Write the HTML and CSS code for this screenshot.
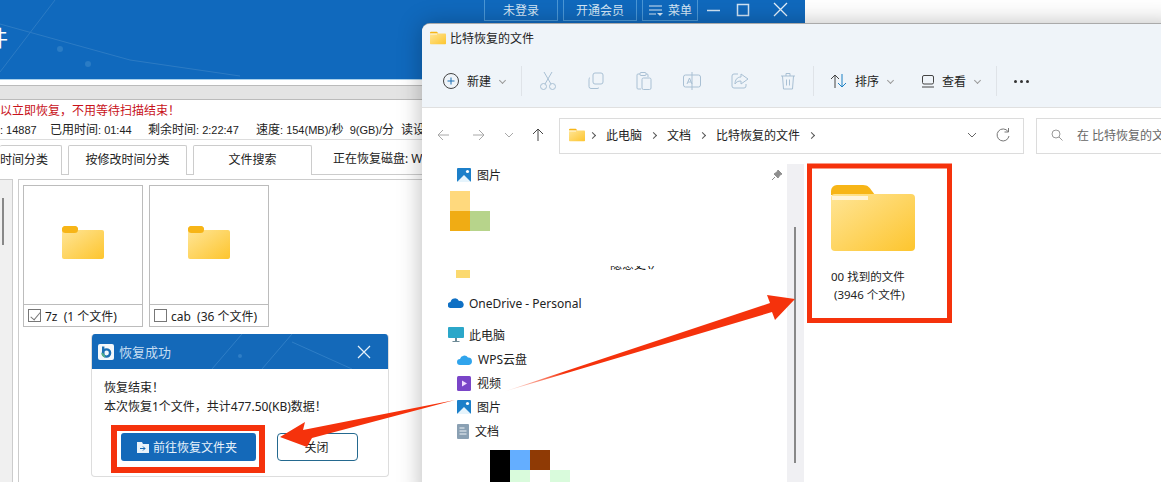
FILE: index.html
```html
<!DOCTYPE html>
<html lang="zh-CN">
  <head>
    <meta charset="UTF-8" />
    <title>比特恢复的文件</title>
    <link rel="stylesheet" href="styles.css">
  </head>
  <body>
    <svg class="defs" width="0" height="0">
      <defs>
        <linearGradient id="folder-fill" x1="0" y1="0" x2="1" y2="1">
          <stop offset="0" stop-color="#ffe596" />
          <stop offset="1" stop-color="#fdc52e" />
        </linearGradient>
        <linearGradient id="arrow-fade" gradientUnits="userSpaceOnUse" x1="503" y1="392" x2="565" y2="372">
          <stop offset="0" stop-color="#f5320c" stop-opacity="0" />
          <stop offset="1" stop-color="#f5320c" />
        </linearGradient>
        <symbol id="folder" viewBox="0 0 84 66">
          <path d="M0 6a6 6 0 0 1 6-6h26c5 0 7 3 9 6l3 4H0z" fill="#f7b517" />
          <rect y="9" width="84" height="57" rx="4" fill="url(#folder-fill)" />
          <rect x="1" y="11" width="36" height="4" fill="#fff4d8" />
        </symbol>
        <symbol id="folder-small" viewBox="0 0 42 33">
          <rect width="16" height="9" rx="4" fill="#f7b517" />
          <rect y="4" width="42" height="29" rx="2" fill="url(#folder-fill)" />
          <rect width="16" height="7" rx="3.500" fill="#f7b517" />
        </symbol>
        <symbol id="pics" viewBox="0 0 14 14">
          <rect width="14" height="14" rx="1" fill="#1c7fc9" />
          <path d="M0 14l7-7 7 7z" fill="#e6f4fc" />
          <circle cx="10.5" cy="3.5" r="1.6" fill="#fff" />
        </symbol>
      </defs>
    </svg>

    <div class="desktop">
      <!-- Recovery program, behind the explorer window -->
      <div class="app">
        <header class="app-head">
          <svg class="head-lines" width="400" height="79">
            <path d="M55 0L0 72M0 24l130 36M130 60l110 16" stroke="#2c7bc4" fill="none" />
            <circle cx="60" cy="49" r="3" fill="#2a7cc5" />
            <circle cx="88" cy="64" r="3" fill="#2a7cc5" />
          </svg>
          <span class="app-title">件</span>
          <div class="win-btns">
            <span class="head-btn">未登录</span>
            <span class="head-btn">开通会员</span>
            <span class="head-btn head-btn-menu">
              <svg width="16" height="14" viewBox="0 0 16 14">
                <path d="M1 3h13M1 7h13M1 11h7" stroke="#d5e7f6" fill="none" />
                <path d="M9 10l3 3 3-3z" fill="#d5e7f6" />
              </svg>
              菜单
            </span>
            <svg class="win-icon" width="90" height="20" viewBox="0 0 90 20">
              <path d="M1 10.5h13" stroke="#cfe3f4" stroke-width="1.5" />
              <rect x="31.5" y="4.5" width="11" height="11" fill="none" stroke="#cfe3f4" stroke-width="1.5" />
              <path d="M68 3l13 13M81 3L68 16" stroke="#e4f0fa" stroke-width="1.3" />
            </svg>
          </div>
        </header>
        <div class="app-gray"></div>
        <p class="notice">以立即恢复，不用等待扫描结束！</p>
        <div class="stats">
          <span><b>: 14887</b></span>
          <span>已用时间<b>: 01:44</b></span>
          <span>剩余时间<b>: 2:22:47</b></span>
          <span>速度<b>: 154(MB)/</b>秒&nbsp; <b>9(GB)/</b>分</span>
          <span>读设备</span>
        </div>
        <div class="tabs">
          <span class="tab tab-cut">时间分类</span>
          <span class="tab">按修改时间分类</span>
          <span class="tab">文件搜索</span>
          <span class="tab-status">正在恢复磁盘: W</span>
        </div>
        <div class="app-body">
          <div class="tree"><span class="tree-thumb"></span></div>
          <div class="cards">
            <div class="card">
              <div class="card-pic"><svg width="42" height="33"><use href="#folder-small" /></svg></div>
              <div class="card-foot"><span class="check check-on"></span>7z&nbsp;&nbsp;(1 个文件)</div>
            </div>
            <div class="card">
              <div class="card-pic"><svg width="42" height="33"><use href="#folder-small" /></svg></div>
              <div class="card-foot"><span class="check"></span>cab&nbsp;&nbsp;(36 个文件)</div>
            </div>
          </div>
        </div>
      </div>

      <!-- Finished dialog -->
      <div class="dialog">
        <div class="dialog-head">
          <svg class="dialog-lines" width="298" height="35">
            <path d="M120 35L150 0M170 35L200 0M200 8l60 27" stroke="#2f7ec6" fill="none" />
            <circle cx="148" cy="22" r="2" fill="#2f7ec6" />
          </svg>
          <svg class="dialog-logo" width="16" height="16" viewBox="0 0 16 16">
            <rect width="16" height="16" rx="2" fill="#f4f8fb" />
            <rect x="4" y="2.5" width="2.4" height="8" fill="#1b6fb4" />
            <circle cx="8.5" cy="9" r="3.6" fill="none" stroke="#1b6fb4" stroke-width="2.4" />
            <path d="M4.2 9a4.4 4.4 0 0 0 3 3.6" fill="none" stroke="#55b08a" stroke-width="2" />
          </svg>
          <span class="dialog-title">恢复成功</span>
          <svg class="dialog-close" width="14" height="14" viewBox="0 0 14 14">
            <path d="M1 1l12 12M13 1L1 13" stroke="#e6f1fa" stroke-width="1.2" />
          </svg>
        </div>
        <div class="dialog-body">
          <p>恢复结束！</p>
          <p>本次恢复1个文件，共计477.50(KB)数据！</p>
          <div class="dialog-btns">
            <button class="btn btn-main">
              <svg width="12" height="11" viewBox="0 0 12 11">
                <path d="M0 0h5l1 2h6v9H0z" fill="#e8f2fa" />
                <path d="M3 6.5h5M6 4.5l2 2-2 2" stroke="#1469b5" fill="none" />
              </svg>
              前往恢复文件夹
            </button>
            <button class="btn btn-close">关闭</button>
          </div>
        </div>
      </div>

      <!-- Explorer window -->
      <div class="explorer">
        <div class="title-bar">
          <svg width="16" height="14"><use href="#folder" /></svg>
          <span>比特恢复的文件</span>
        </div>
        <div class="toolbar">
          <div class="tool tool-new">
            <svg width="18" height="18" viewBox="0 0 18 18">
              <circle cx="9" cy="9" r="7.5" fill="none" stroke="#444" />
              <path d="M9 5.5v7M5.5 9h7" stroke="#1b6fb4" />
            </svg>
            <span>新建</span><i class="caret"></i>
          </div>
          <span class="tool-sep"></span>
          <div class="tool-group">
            <svg width="20" height="20" viewBox="0 0 20 20" class="dim"><circle cx="5.5" cy="15.5" r="3" /><circle cx="14.5" cy="15.5" r="3" /><path d="M7 13L14 1M13 13L6 1" /></svg>
            <svg width="20" height="20" viewBox="0 0 20 20" class="dim"><rect x="7" y="2" width="10" height="11" rx="2" /><path d="M4 6.500a2 2 0 0 0-1 2v7a2 2 0 0 0 2 2h6a2 2 0 0 0 2-1" /></svg>
            <svg width="20" height="20" viewBox="0 0 20 20" class="dim"><path d="M6 3H4a1 1 0 0 0-1 1v13a1 1 0 0 0 1 1h3M12 3h1a1 1 0 0 1 1 1v2" /><rect x="6" y="1.500" width="6" height="3" rx="1" /><rect x="8" y="7" width="9" height="11.500" rx="1.500" /></svg>
            <svg width="20" height="20" viewBox="0 0 20 20" class="dim"><rect x="1.500" y="4" width="17" height="12" rx="2" /><path d="M10 1v18M5 13l2.500-6L10 13M6 11h3" /></svg>
            <svg width="20" height="20" viewBox="0 0 20 20" class="dim"><path d="M8 3H4a2 2 0 0 0-2 2v10a2 2 0 0 0 2 2h10a2 2 0 0 0 2-2v-2" /><path d="M11 3l7 5-7 5v-3c-3 0-5 1-6 3 0-4 2-7 6-7z" /></svg>
            <svg width="20" height="20" viewBox="0 0 20 20" class="dim"><path d="M3 5h14M8 5V2.500h4V5M4.500 5l1 13h9l1-13M8.500 8.500v6M11.500 8.500v6" /></svg>
          </div>
          <span class="tool-sep"></span>
          <div class="tool tool-sort">
            <svg width="18" height="16" viewBox="0 0 18 16">
              <path d="M5 15V2M1 6l4-4 4 4" stroke="#444" fill="none" />
              <path d="M12 1v13M8 10l4 4 4-4" stroke="#1b80c4" fill="none" />
            </svg>
            <span>排序</span><i class="caret"></i>
          </div>
          <div class="tool tool-view">
            <svg width="14" height="14" viewBox="0 0 14 14">
              <rect x="1.500" y="1.500" width="11" height="8.500" rx="1.500" fill="none" stroke="#444" />
              <path d="M1 13h12" stroke="#444" />
            </svg>
            <span>查看</span><i class="caret"></i>
          </div>
          <span class="tool-sep"></span>
          <span class="more"><i></i><i></i><i></i></span>
        </div>

        <div class="nav-row">
          <svg class="nav-arrows" width="110" height="16" viewBox="0 0 110 16">
            <path d="M1 8h11M1 8l5-5M1 8l5 5" stroke="#a8a8a8" fill="none" />
            <path d="M36 8h11M47 8l-5-5M47 8l-5 5" stroke="#a8a8a8" fill="none" />
            <path d="M68 6l4 4 4-4" stroke="#a8a8a8" fill="none" />
            <path d="M101 2v12M101 2l-5 5M101 2l5 5" stroke="#444" fill="none" />
          </svg>
          <div class="address">
            <svg class="addr-folder" width="16" height="14"><use href="#folder" /></svg>
            <i class="crumb-sep"></i><span>此电脑</span>
            <i class="crumb-sep"></i><span>文档</span>
            <i class="crumb-sep"></i><span>比特恢复的文件</span>
            <i class="crumb-sep"></i>
            <svg class="addr-tools" width="44" height="16" viewBox="0 0 44 16">
              <path d="M1 6l4 4 4-4" stroke="#666" fill="none" />
              <path d="M41 4.500A6 6 0 1 0 42 9M41.500 1v4h-4" stroke="#777" fill="none" />
            </svg>
          </div>
          <div class="search">
            <svg width="12" height="12" viewBox="0 0 12 12">
              <circle cx="5" cy="5" r="4" fill="none" stroke="#999" />
              <path d="M8 8l3.500 3.500" stroke="#999" />
            </svg>
            <span>在 比特恢复的文件中搜索</span>
          </div>
        </div>

        <div class="explorer-body">
          <nav class="side">
            <div class="side-row side-sub side-first">
              <svg width="14" height="14"><use href="#pics" /></svg><span>图片</span>
              <svg class="pin" width="12" height="12" viewBox="0 0 12 12">
                <path d="M7 1l4 4-2 1-2 3-4-4 3-2zM4 8l-3 3" fill="#8f8f8f" stroke="#8f8f8f" />
              </svg>
            </div>
            <div class="mosaic mosaic-top">
              <i class="m-sand"></i><i></i>
              <i class="m-amber"></i><i class="m-green"></i>
            </div>
            <div class="side-clip">
              <svg class="clip-folder" width="14" height="8"><rect width="14" height="8" fill="#fbd96f" /></svg>
              <span class="clip-text">隐意史\）</span>
            </div>
            <div class="side-row side-onedrive">
              <svg width="16" height="10" viewBox="0 0 16 10">
                <path d="M3 10a3 3 0 0 1-.5-6A4.500 4.500 0 0 1 11 3a3.500 3.500 0 0 1 2 7z" fill="#0f70c4" />
              </svg>
              <span>OneDrive - Personal</span>
            </div>
            <div class="side-row side-pc">
              <svg width="16" height="16" viewBox="0 0 16 16">
                <rect width="16" height="11" rx="1" fill="#2ba7c9" />
                <path d="M7 11h2v3H7zM4.500 14h7v1h-7z" fill="#6e8a96" />
              </svg>
              <span>此电脑</span>
            </div>
            <div class="side-row side-sub">
              <svg width="15" height="11" viewBox="0 0 15 11">
                <path d="M3 11a3 3 0 0 1 0-6 4.500 4.500 0 0 1 8-1.500A3.800 3.800 0 0 1 12 11z" fill="#30a4ec" />
              </svg>
              <span>WPS云盘</span>
            </div>
            <div class="side-row side-sub">
              <svg width="14" height="15" viewBox="0 0 14 15">
                <rect width="14" height="15" rx="1.500" fill="#7a45c8" />
                <path d="M5 4.500l5 3-5 3z" fill="#f0dcff" />
              </svg>
              <span>视频</span>
            </div>
            <div class="side-row side-sub">
              <svg width="14" height="14"><use href="#pics" /></svg><span>图片</span>
            </div>
            <div class="side-row side-sub">
              <svg width="12" height="15" viewBox="0 0 12 15">
                <rect width="12" height="15" rx="1" fill="#8aa0b3" />
                <path d="M2.500 4h5M2.500 7h7M2.500 10h7" stroke="#eef3f7" />
              </svg>
              <span>文档</span>
            </div>
            <div class="mosaic-low">
              <i class="m-black"></i><i class="m-blue"></i><i class="m-brown"></i><i></i>
              <i class="m-black"></i><i class="m-mint"></i><i></i><i class="m-mint"></i>
            </div>
          </nav>
          <div class="side-scroll"><span></span></div>
          <div class="files">
            <div class="file">
              <svg width="84" height="66"><use href="#folder" /></svg>
              <p>00 找到的文件<br>&nbsp;(3946 个文件)</p>
            </div>
          </div>
        </div>
      </div>

      <!-- Red marks drawn over the screenshot -->
      <svg class="marks" width="1161" height="482">
        <rect x="114" y="428" width="148" height="42" fill="none" stroke="#f5320c" stroke-width="6" />
        <rect x="809.500" y="166" width="140" height="154.500" fill="none" stroke="#f5320c" stroke-width="5" />
        <path d="M503 392L770 303 767 295 795 299 775 320 772 312z" fill="url(#arrow-fade)" />
        <path d="M280 437L305 422 303 430 455 400 312 438 307 447z" fill="#f5320c" />
      </svg>
    </div>
  </body>
</html>
```

FILE: styles.css
```css
/* Page */
* {
  box-sizing: border-box;
}
body {
  margin: 0;
  font-family: "Noto Sans", "Noto Sans CJK SC", sans-serif;
  font-size: 12px;
  color: #222;
  background: #fff;
}
p {
  margin: 0;
}
.defs {
  position: absolute;
}
.desktop {
  position: relative;
  width: 1161px;
  height: 482px;
  overflow: hidden;
  background: #fff;
}

/* Recovery program */
.app {
  position: absolute;
  left: 0;
  top: 0;
  width: 805px;
  height: 482px;
  display: flex;
  flex-direction: column;
  background: #fff;
  white-space: nowrap;
  overflow: hidden;
}
.app-head {
  position: relative;
  flex: none;
  height: 80px;
  padding-right: 9px;
  display: flex;
  justify-content: space-between;
  background: #1069bd;
  border-bottom: 1px solid #a9d0ea;
}
.head-lines {
  position: absolute;
  left: 0;
  top: 0;
}
.app-title {
  margin: 23px 0 0 -14px;
  font-size: 22px;
  line-height: 28px;
  color: #fff;
}
.win-btns {
  display: flex;
  align-items: flex-start;
  gap: 5px;
}
.head-btn {
  width: 74px;
  height: 21px;
  display: flex;
  align-items: center;
  justify-content: center;
  gap: 4px;
  color: #d5e7f6;
  border: 1px solid #4b97d6;
  border-top: 0;
}
.head-btn-menu {
  width: 56px;
}
.win-icon {
  margin-left: 3px;
}
.app-gray {
  flex: none;
  height: 15px;
  margin-top: 5px;
  background: #e4e4e4;
  border-top: 1px solid #bbb;
  border-bottom: 1px solid #bbb;
}
.notice {
  margin-top: 3px;
  line-height: 16px;
  color: #c8121a;
}
.stats {
  display: grid;
  grid-template-columns: 50px 98px 108px 145px auto;
  margin-top: 2px;
  height: 19px;
  line-height: 18px;
  border-bottom: 1px solid #ddd;
}
/* the numbers in this row are set smaller than the Chinese around them */
.stats b {
  font-family: "Liberation Sans", sans-serif;
  font-size: 11px;
  font-weight: normal;
}
.tabs {
  display: flex;
  gap: 6px;
  height: 30px;
  margin-top: 5px;
  border-bottom: 1px solid #ccc;
}
.tab {
  width: 119px;
  height: 30px;
  line-height: 28px;
  text-align: center;
  background: #fff;
  border: 1px solid #ccc;
  border-bottom: 0;
  border-radius: 2px 2px 0 0;
}
.tab-cut {
  width: 62px;
  text-align: right;
  padding-right: 17px;
  border-left: 0;
}
.tab-status {
  margin-left: 15px;
  line-height: 28px;
}
.app-body {
  flex: 1;
  display: flex;
  gap: 6px;
  margin-top: 4px;
}
.tree {
  width: 13px;
  background: #f0f0f0;
  border-right: 1px solid #ccc;
  border-top: 1px solid #ccc;
  padding: 18px 0 0 2px;
}
.tree-thumb {
  display: block;
  width: 2px;
  height: 47px;
  background: #888;
}
.cards {
  flex: 1;
  display: flex;
  gap: 6px;
  padding: 5px 0 0 4px;
  border-left: 1px solid #ccc;
  border-top: 1px solid #ccc;
  margin-left: -1px;
}
.card {
  width: 120px;
  height: 142px;
  display: flex;
  flex-direction: column;
  border: 1px solid #bcbcbc;
}
.card-pic {
  height: 119px;
  padding-bottom: 5px;
  display: flex;
  align-items: center;
  justify-content: center;
  border-bottom: 1px solid #bcbcbc;
}
.card-foot {
  flex: 1;
  display: flex;
  align-items: center;
  gap: 4px;
  padding-left: 4px;
}
.check {
  flex: none;
  position: relative;
  width: 13px;
  height: 13px;
  border: 1px solid #777;
}
.check-on::after {
  content: "";
  position: absolute;
  left: 4px;
  top: 0;
  width: 4px;
  height: 9px;
  border: solid #777;
  border-width: 0 1px 1px 0;
  transform: rotate(40deg);
}

/* Finished dialog */
.dialog {
  position: absolute;
  left: 91px;
  top: 334px;
  width: 298px;
  height: 143px;
  display: flex;
  flex-direction: column;
  background: #fff;
  border: 1px solid #ddd;
  border-top: 0;
  border-radius: 4px;
  overflow: hidden;
}
.dialog-head {
  position: relative;
  flex: none;
  height: 35px;
  display: flex;
  align-items: center;
  padding: 0 17px 0 6px;
  background: #1469b9;
  color: #c4dcf1;
  font-size: 13px;
}
.dialog-lines {
  position: absolute;
  left: 0;
  top: 0;
}
.dialog-logo,
.dialog-close {
  position: relative;
}
.dialog-title {
  position: relative;
  flex: 1;
  margin-left: 5px;
}
.dialog-body {
  flex: 1;
  padding: 9px 12px 0;
  line-height: 19px;
  color: #222;
}
.dialog-btns {
  display: flex;
  gap: 21px;
  margin: 17px 0 0 17px;
}
.btn {
  height: 28px;
  padding: 0;
  display: flex;
  align-items: center;
  justify-content: center;
  gap: 4px;
  font: inherit;
  border-radius: 3px;
}
.btn-main {
  width: 135px;
  padding-right: 3px;
  color: #e8f2fa;
  background: #1469b9;
  border: 0;
}
.btn-close {
  width: 81px;
  padding-right: 2px;
  color: #222;
  background: #fff;
  border: 1px solid #24698f;
  border-radius: 4px;
}

/* Explorer window */
.explorer {
  position: absolute;
  left: 422px;
  top: 24px;
  width: 760px;
  height: 480px;
  display: flex;
  flex-direction: column;
  background: #fff;
  border-radius: 8px 0 0 0;
  box-shadow: 0 -1px 0 #aaa, 0 0 24px rgba(0, 0, 0, 0.28);
  white-space: nowrap;
}
.title-bar {
  flex: none;
  height: 36px;
  display: flex;
  align-items: center;
  gap: 4px;
  padding: 0 0 9px 8px;
  background: #eff4f9;
  border-radius: 8px 0 0 0;
  color: #222;
}
.toolbar {
  flex: none;
  height: 48px;
  display: flex;
  align-items: center;
  padding: 0 0 5px 20px;
  background: #eff4f9;
  border-bottom: 1px solid #e0e0e0;
}
.tool {
  display: flex;
  align-items: center;
  gap: 7px;
}
.caret {
  width: 5px;
  height: 5px;
  margin: -2px 0 0 2px;
  border: solid #9a9a9a;
  border-width: 0 1px 1px 0;
  transform: rotate(45deg);
}
.tool-sep {
  width: 1px;
  height: 30px;
  background: #dfe3e8;
}
.tool-new {
  width: 79px;
}
.tool-group {
  width: 291px;
  display: flex;
  gap: 28px;
  padding-left: 16px;
}
.dim {
  fill: none;
  stroke: #a9c0d4;
  stroke-width: 1;
}
.tool-sort {
  margin-left: 16px;
  width: 74px;
}
.tool-view {
  margin-left: 17px;
  width: 75px;
}
.more {
  display: flex;
  gap: 3px;
  margin-left: 17px;
}
.more i {
  width: 3px;
  height: 3px;
  border-radius: 50%;
  background: #333;
}
.nav-row {
  flex: none;
  height: 56px;
  display: flex;
  align-items: flex-start;
  padding: 10px 0 0 15px;
}
.nav-arrows {
  flex: none;
  margin: 9px 12px 0 0;
}
.address {
  flex: none;
  width: 465px;
  height: 36px;
  display: flex;
  align-items: center;
  padding: 0 12px 2px 9px;
  border: 1px solid #dcdcdc;
}
.addr-folder {
  margin-right: -4px;
}
.crumb-sep {
  width: 5px;
  height: 5px;
  margin: 0 11px 0 9px;
  border: solid #555;
  border-width: 1px 1px 0 0;
  transform: rotate(45deg);
}
.addr-tools {
  margin-left: auto;
}
.search {
  flex: none;
  width: 200px;
  height: 36px;
  margin-left: 12px;
  display: flex;
  align-items: center;
  gap: 14px;
  padding: 0 0 2px 14px;
  border: 1px solid #dcdcdc;
  color: #666;
  overflow: hidden;
}
.explorer-body {
  flex: 1;
  display: flex;
}
.side {
  width: 365px;
}
.side-row {
  height: 24px;
  display: flex;
  align-items: center;
  gap: 5px;
  padding-left: 26px;
  color: #222;
}
.side-sub {
  padding-left: 35px;
  gap: 6px;
}
.side-first {
  position: relative;
  margin-top: -1px;
}
.pin {
  position: absolute;
  left: 349px;
  top: 6px;
}
.mosaic {
  display: grid;
  grid-template-columns: 20px 20px;
  grid-auto-rows: 20px;
  margin: 4px 0 0 28px;
}
.m-sand {
  background: #ffd97d;
}
.m-amber {
  background: #f0ac14;
}
.m-green {
  background: #b7d48b;
}
.side-clip {
  height: 12px;
  display: flex;
  gap: 140px;
  margin: 35px 0 0 34px;
  overflow: hidden;
}
.clip-folder {
  margin-top: 4px;
}
.clip-text {
  margin-top: -9px;
  line-height: 16px;
  height: 16px;
  color: #111;
}
.side-onedrive {
  margin-top: 13px;
}
.side-pc {
  margin-top: 8px;
}
.mosaic-low {
  display: grid;
  grid-template-columns: repeat(4, 20px);
  grid-auto-rows: 20px;
  margin: 7px 0 0 68px;
}
.m-black {
  background: #000;
}
.m-blue {
  background: #64aeff;
}
.m-brown {
  background: #8f3a05;
}
.m-mint {
  background: #d9fbdc;
}
.side-scroll {
  width: 17px;
  background: #f0f0f3;
  padding: 63px 0 0 7px;
}
.side-scroll span {
  display: block;
  width: 2px;
  height: 236px;
  background: #888;
}
.files {
  flex: 1;
  padding: 21px 0 0 27px;
}
.file p {
  margin-top: 13px;
  line-height: 18px;
  font-size: 11.500px;
}

/* Red marks */
.marks {
  position: absolute;
  left: 0;
  top: 0;
  pointer-events: none;
}
```
